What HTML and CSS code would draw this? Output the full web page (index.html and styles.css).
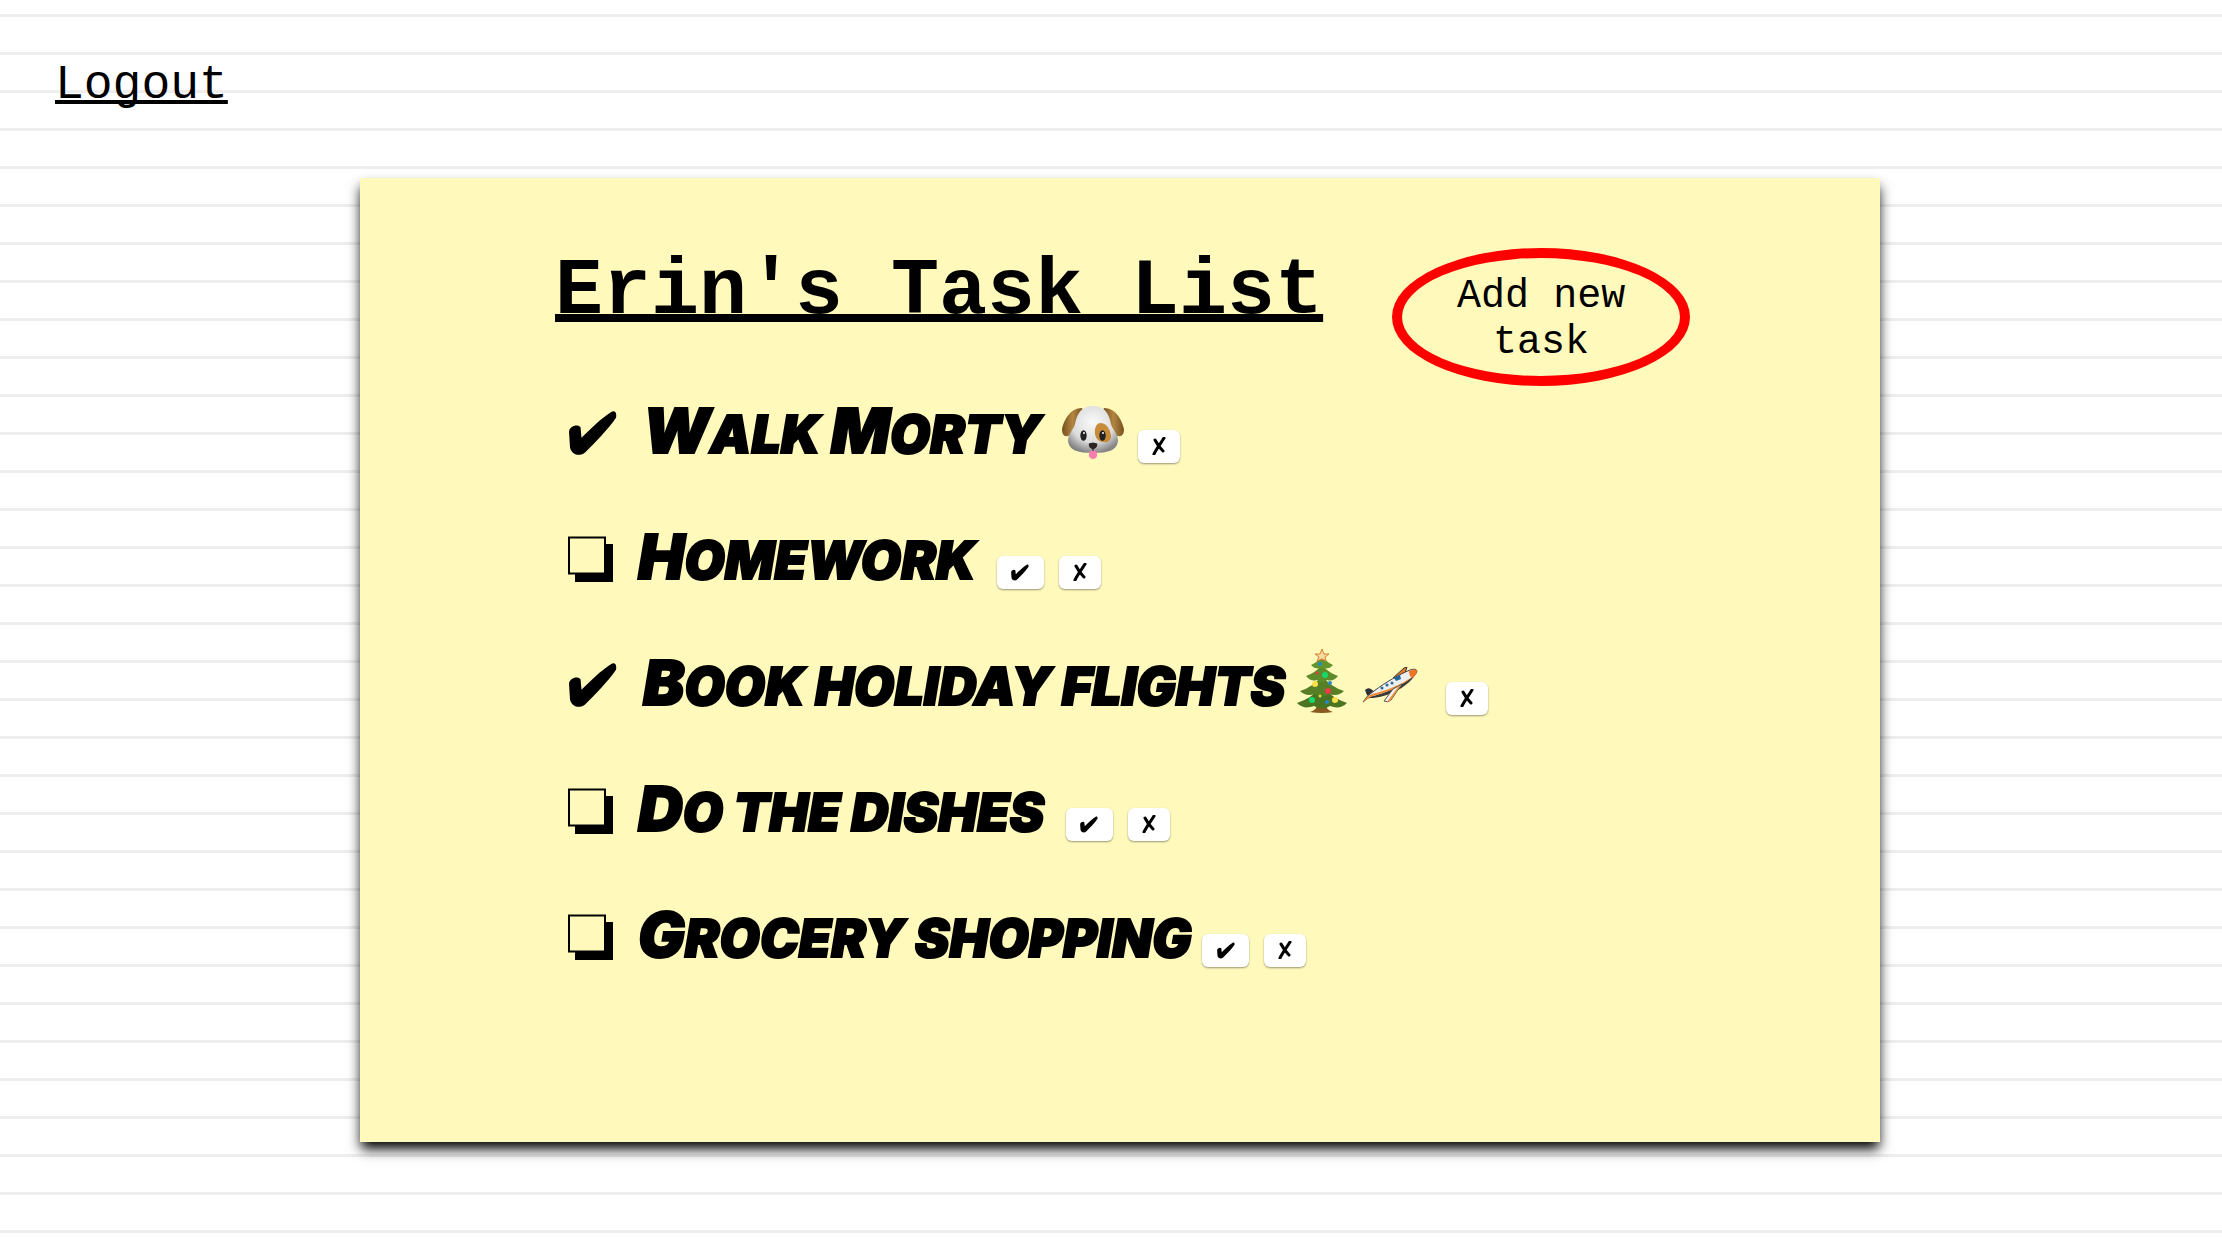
FILE: index.html
```
<!DOCTYPE html>
<html lang="en">
<head>
<meta charset="utf-8">
<title>Task List</title>
<link rel="stylesheet" href="styles.css">
</head>
<body>
<svg class="defs" aria-hidden="true">
  <symbol id="tick" viewBox="0 0 50 48">
    <path d="M0 23C0 17 9 14 12 18L13 29C22 20 33 9 44 2C48 0 50 3 49 8C40 21 28 33 17 44C11 49 3 47 1 39Z"/>
  </symbol>
  <symbol id="cross" viewBox="0 0 14 18">
    <path d="M3 3C5 7 8 11 11 14M12 1C9 6 5 11 2 17" fill="none" stroke="#000" stroke-width="3" stroke-linecap="round"/>
  </symbol>
  <symbol id="box" viewBox="0 0 45 46">
    <path d="M38 8H45V46H7V38H38Z"/><path d="M1 1.5H37V37.5H1Z" fill="none" stroke="#000" stroke-width="2"/>
  </symbol>
</svg>
<nav class="nav"><a href="#logout">Logout</a></nav>
<main class="note">
  <header class="head">
    <h1>Erin's Task List</h1>
    <button class="add" type="button">Add new task</button>
  </header>
  <ul class="tasks">
    <li class="done">
      <svg class="mark" role="img" aria-label="Done"><use href="#tick"/></svg>
      <span class="name"><span class="cap">W</span>alk <span class="cap">M</span>orty </span>
      <svg class="emoji dog" viewBox="0 0 62 54" role="img" aria-label="Dog">
        <defs>
          <radialGradient id="fur" cx=".5" cy=".35" r=".65"><stop offset="0" stop-color="#fafafa"/><stop offset=".65" stop-color="#dcdcdc"/><stop offset="1" stop-color="#858585"/></radialGradient>
          <linearGradient id="ear" x2="1"><stop offset="0" stop-color="#76521f"/><stop offset=".5" stop-color="#b38541"/><stop offset="1" stop-color="#76521f"/></linearGradient>
        </defs>
        <path d="M20 2C8 2 2 14 0 23C0 28 2 31 6 30C12 29 14 15 21 4Z" fill="url(#ear)"/>
        <path d="M42 2C54 2 60 14 62 23C62 28 60 31 56 30C50 29 48 15 41 4Z" fill="url(#ear)"/>
        <path d="M31 0C43 0 47 8 49 18C51 25 56 27 56 35C55 44 47 47 31 47C15 47 7 44 6 35C6 27 11 25 13 18C15 8 19 0 31 0Z" fill="url(#fur)"/>
        <path d="M38 17C45 17 49 25 49 31C48 38 40 37 36 34C31 29 32 18 38 17Z" fill="#c88b3a"/>
        <ellipse cx="21.500" cy="29.500" rx="3.200" ry="5.200" fill="#222"/><ellipse cx="40.500" cy="29.500" rx="3.200" ry="5.200" fill="#222"/>
        <circle cx="22" cy="27" r="1" fill="#fff"/><circle cx="41" cy="27" r="1" fill="#fff"/>
        <path d="M27 46Q31 43 35 46V50Q34 53 31 53Q28 53 27 50Z" fill="#f77fb0"/>
        <path d="M27 38Q31 36 35 38Q35 42 31 43Q27 42 27 38ZM31 42V45" fill="#2c2424" stroke="#2c2424"/>
      </svg>
      <button class="act" type="button" aria-label="Delete"><svg class="cross"><use href="#cross"/></svg></button>
    </li>
    <li>
      <svg class="mark" role="img" aria-label="Not done"><use href="#box"/></svg>
      <span class="name"><span class="cap">H</span>omework </span>
      <button class="act wide" type="button" aria-label="Complete"><svg class="tick"><use href="#tick"/></svg></button>
      <button class="act" type="button" aria-label="Delete"><svg class="cross"><use href="#cross"/></svg></button>
    </li>
    <li class="done">
      <svg class="mark" role="img" aria-label="Done"><use href="#tick"/></svg>
      <span class="name"><span class="cap">B</span>ook holiday flights</span>
      <svg class="emoji tree" viewBox="0 0 52 64" role="img" aria-label="Christmas tree">
        <path d="M22 54H29Q30 61 37 63Q26 65 14 63Q21 61 22 54Z" fill="#8a5a20"/>
        <path d="M25 38Q16 49 1 54Q8 61 18 57Q26 62 34 57Q44 61 51 54Q36 49 27 38Z" fill="#4a7422"/>
        <path d="M26 27Q17 38 4 42Q10 48 19 45Q26 50 33 45Q42 48 48 42Q35 38 26 27Z" fill="#567f26"/>
        <path d="M26 16Q19 24 10 27Q15 33 21 31Q26 35 31 31Q37 33 42 27Q33 24 26 16Z" fill="#5f8c2b"/>
        <path d="M26 7Q22 13 15 16Q19 21 26 19Q33 21 37 16Q30 13 26 7Z" fill="#65942d"/>
        <path d="M26 0L28 5H33L29 8L30 12L26 10L21 12L23 8L19 5H24Z" fill="#fbd9a0" stroke="#d8802f"/>
        <circle cx="24" cy="15" r="2" fill="#258bc8"/><circle cx="21" cy="24" r="1.500" fill="#e34"/><circle cx="29" cy="26" r="3" fill="#16d96b"/>
        <circle cx="19" cy="35" r="3" fill="#fbe04a"/><circle cx="34" cy="34" r="2" fill="#258bc8"/><circle cx="32" cy="42" r="3" fill="#ef3d45"/>
        <circle cx="16" cy="51" r="3" fill="#16d96b"/><circle cx="39" cy="51" r="3" fill="#fbe04a"/><circle cx="31" cy="53" r="2" fill="#258bc8"/><circle cx="24" cy="47" r="1.500" fill="#d6e237"/>
      </svg>
      <svg class="emoji plane" viewBox="0 0 56 36" role="img" aria-label="Airplane departure">
        <path d="M31 11L42 1L45 0L41 12Z" fill="#e77b25" stroke="#333"/>
        <path d="M3 23Q6 20 9 22L14 26L7 31Q4 27 3 23Z" fill="#2d3036"/>
        <path d="M1 35Q5 28 12 24C24 15 38 7 48 3Q54 1 55 4C54 10 41 18 30 23C20 28 12 30 6 31Z" fill="#eee" stroke="#444"/>
        <path d="M8 30C24 26 40 19 53 8C45 21 24 31 8 31Z" fill="#3a3a3c"/>
        <path d="M1 35Q5 29 10 27C24 24 40 17 50 10C43 17 23 27 10 29Z" fill="#ef8b2c"/>
        <path d="M47 4Q54 1 55 4Q54 9 50 11Q47 9 47 4Z" fill="#ef7424"/>
        <path d="M31 22L40 17L29 33Q26 36 22 34Z" fill="#f2f2f2" stroke="#555"/><path d="M39 18L28 34L25 35L36 20Z" fill="#ef8b2c"/>
        <path d="M32 11L38 8L39 12L34 14Z" fill="#1e679c"/>
        <circle cx="20" cy="21" r="1.500" fill="#256b9e"/><circle cx="25" cy="18" r="1.500" fill="#256b9e"/><circle cx="30" cy="16" r="1.500" fill="#256b9e"/>
      </svg>
      <button class="act" type="button" aria-label="Delete"><svg class="cross"><use href="#cross"/></svg></button>
    </li>
    <li>
      <svg class="mark" role="img" aria-label="Not done"><use href="#box"/></svg>
      <span class="name"><span class="cap">D</span>o the dishes </span>
      <button class="act wide" type="button" aria-label="Complete"><svg class="tick"><use href="#tick"/></svg></button>
      <button class="act" type="button" aria-label="Delete"><svg class="cross"><use href="#cross"/></svg></button>
    </li>
    <li>
      <svg class="mark" role="img" aria-label="Not done"><use href="#box"/></svg>
      <span class="name"><span class="cap">G</span>rocery shopping</span>
      <button class="act wide" type="button" aria-label="Complete"><svg class="tick"><use href="#tick"/></svg></button>
      <button class="act" type="button" aria-label="Delete"><svg class="cross"><use href="#cross"/></svg></button>
    </li>
  </ul>
</main>
</body>
</html>
```
FILE: styles.css
```
* { box-sizing: border-box; }
body {
  margin: 0;
  min-height: 100vh;
  padding: 58px 0 114px 18px;
  background: linear-gradient(#eee 3px, #fff 3px) 0 14px / 100% 38px;
  color: #000;
  font-family: "Liberation Mono", "Courier New", monospace;
}
.defs { position: absolute; width: 0; height: 0; }
.nav { padding-left: 37px; margin-bottom: 66px; font-size: 48px; line-height: 54px; }
.nav a { color: #000; text-decoration-thickness: 4px; text-underline-offset: 2px; text-decoration-skip-ink: none; }
.note {
  max-width: 1520px;
  min-height: 964px;
  margin: 0 auto;
  padding: 68px 180px 90px 195px;
  background: #fffabc;
  box-shadow: 0 8px 12px -1px #000;
}
.head { display: flex; align-items: flex-start; gap: 69px; }
h1 {
  flex: none;
  margin: 0;
  font-size: 80px;
  line-height: 92px;
  white-space: nowrap;
  text-decoration: underline;
  text-decoration-thickness: 8px;
  text-underline-offset: 1px;
  text-decoration-skip-ink: none;
}
.add {
  flex: none;
  width: 298px;
  height: 138px;
  margin: 2px 0 -16px;
  padding: 6px 40px 0;
  border: 10px solid #f00;
  border-radius: 50%;
  background: none;
  color: #000;
  font: 40px/46px "Liberation Mono", "Courier New", monospace;
}
.tasks { list-style: none; margin: 0; padding: 0 0 0 13px; }
.tasks li { display: flex; align-items: center; height: 126px; }
.mark { width: 45px; height: 46px; margin-right: 25px; flex: none; }
.done .mark { width: 50px; }
.name {
  margin-right: 11px;
  font: italic 900 52px/80px "Inter", sans-serif;
  text-transform: uppercase;
  white-space: pre;
  -webkit-text-stroke: 2px #000;
}
.cap { font-size: 62px; }
.emoji { flex: none; margin-right: 14px; }
.dog { width: 62px; height: 54px; }
.tree { width: 52px; height: 64px; margin-bottom: 8px; }
.plane { width: 56px; height: 36px; margin-right: 28px; }
.act {
  display: flex;
  flex: none;
  align-items: center;
  justify-content: center;
  width: 42px;
  height: 33px;
  margin: 26px 15px 0 0;
  padding: 0;
  border: 0;
  border-radius: 6px;
  background: #fff;
  box-shadow: 0 1px 2px rgba(0, 0, 0, .4);
}
.act.wide { width: 47px; }
.cross { width: 14px; height: 18px; }
.tick { width: 18px; height: 17px; }
```
